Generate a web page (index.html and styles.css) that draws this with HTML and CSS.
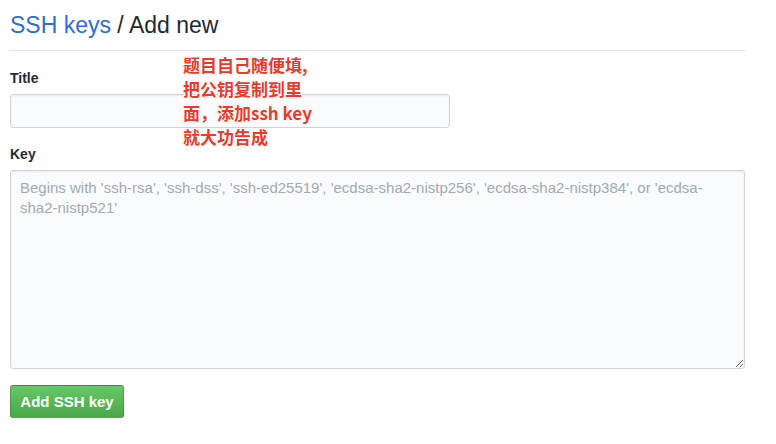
FILE: index.html
```html
<!DOCTYPE html>
<html>
  <head>
    <title>SSH keys / Add new</title>
    <link rel="stylesheet" href="styles.css">
  </head>
  <body>
    <div class="page">
      <h2 class="subhead"><a href="#" class="crumb">SSH keys</a> / Add new</h2>

      <form class="key-form">
        <dl class="form-group">
          <dt><label for="key-title">Title</label></dt>
          <dd><input type="text" id="key-title" class="form-control title-input"></dd>
        </dl>
        <dl class="form-group">
          <dt><label for="key-body">Key</label></dt>
          <dd><textarea id="key-body" class="form-control key-input" placeholder="Begins with 'ssh-rsa', 'ssh-dss', 'ssh-ed25519', 'ecdsa-sha2-nistp256', 'ecdsa-sha2-nistp384', or 'ecdsa-sha2-nistp521'"></textarea></dd>
        </dl>
        <button type="submit" class="btn-primary">Add SSH key</button>
      </form>

      <div class="note">题目自己随便填,<br>把公钥复制到里<br>面，添加ssh key<br>就大功告成</div>
    </div>
  </body>
</html>
```

FILE: styles.css
```css
body {
  margin: 0;
  background: #fff;
  color: #24292e;
  font-family: "Liberation Sans", Arial, sans-serif;
  font-size: 14px;
  line-height: 20px;
}

.page {
  position: relative;
  width: 735px;
  padding: 10px 0 0 10px;
}

.subhead {
  margin: 0;
  padding-bottom: 10px;
  border-bottom: 1px solid #e1e4e8;
  font-size: 23px;
  font-weight: 400;
  line-height: 30px;
  color: #24292e;
}

.crumb {
  color: #2a6fd5;
  text-decoration: none;
}

.key-form {
  margin: 0;
}

.form-group {
  margin: 17px 0 0;
}

.form-group + .form-group {
  margin-top: 16px;
}

.form-group dt {
  margin: 0 0 6px;
  font-weight: 700;
}

.form-group dd {
  margin: 0;
}

.form-control {
  display: block;
  box-sizing: border-box;
  border: 1px solid #d1d5da;
  border-radius: 3px;
  background: #fafbfc;
  box-shadow: inset 0 1px 2px rgba(27, 31, 35, 0.075);
  font-family: inherit;
  font-size: 14px;
  line-height: 20px;
  color: #24292e;
  outline: none;
}

.title-input {
  width: 440px;
  height: 34px;
  padding: 6px 8px;
}

.key-input {
  width: 735px;
  height: 199px;
  padding: 7px 9px;
  font-size: 15px;
  resize: vertical;
}

.key-input::placeholder {
  color: #a3aab1;
}

.btn-primary {
  display: block;
  width: 114px;
  margin-top: 16px;
  padding: 6px 0;
  border: 1px solid rgba(27, 31, 35, 0.2);
  border-radius: 3px;
  background: linear-gradient(180deg, #66c866 0%, #4aa74a 100%);
  color: #fff;
  font-family: inherit;
  font-size: 15px;
  font-weight: 700;
  line-height: 19px;
  text-align: center;
}

.note {
  position: absolute;
  left: 183px;
  top: 53px;
  color: #e83b2b;
  font-family: "Noto Sans CJK SC", "Liberation Sans", sans-serif;
  font-size: 17px;
  font-weight: 700;
  line-height: 24px;
  text-shadow: 1px 0 0 #fff, -1px 0 0 #fff, 0 1px 0 #fff, 0 -1px 0 #fff, 1px 1px 1px #fff, -1px -1px 1px #fff, 0 0 3px rgba(0, 0, 0, 0.25);
}
```
